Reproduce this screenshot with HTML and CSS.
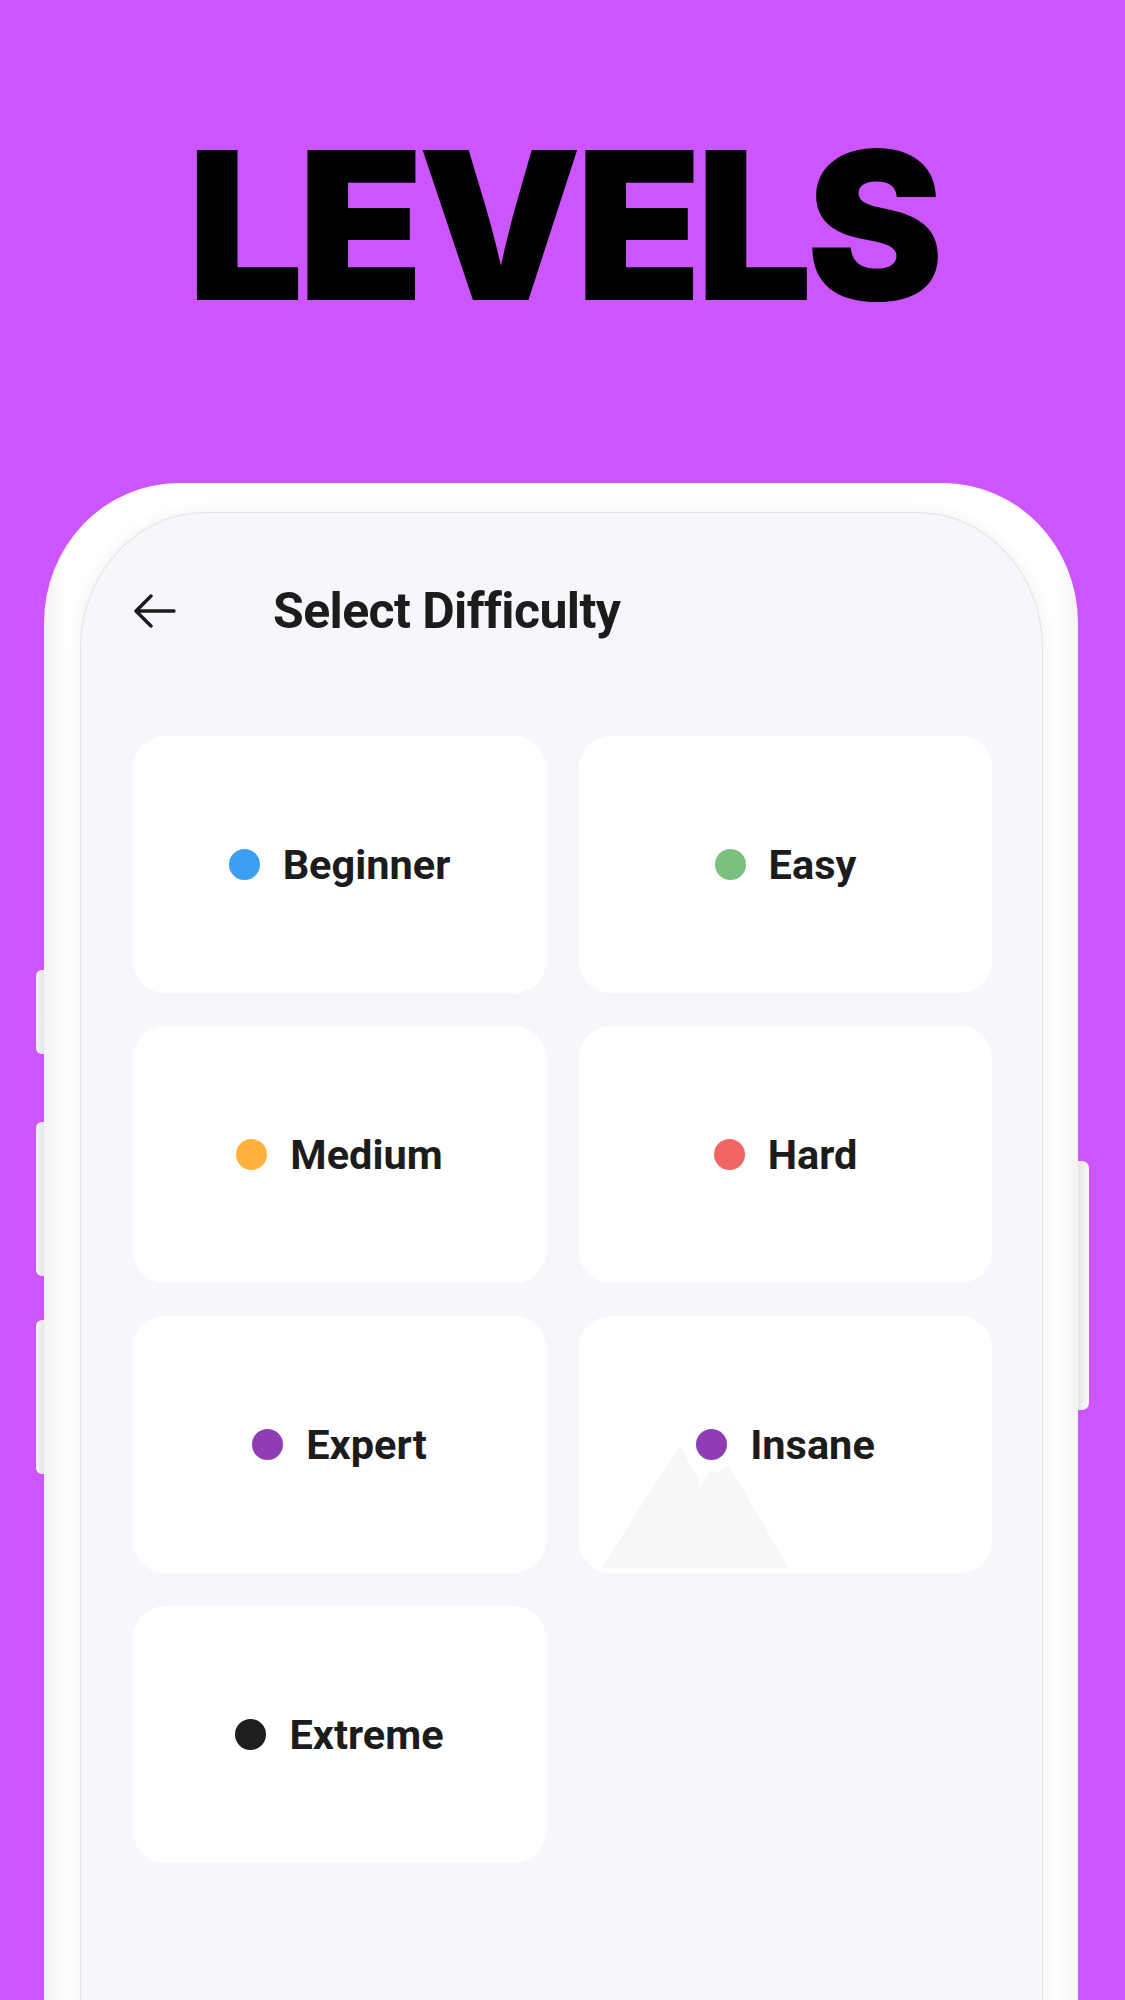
FILE: index.html
```html
<!DOCTYPE html>
<html lang="en">
<head>
<meta charset="utf-8">
<title>Levels</title>
<link rel="stylesheet" href="styles.css">
</head>
<body>
<header class="hero">
  <h1 class="hero-title">LEVELS</h1>
</header>
<div class="phone">
  <span class="btn btn-l1"></span>
  <span class="btn btn-l2"></span>
  <span class="btn btn-l3"></span>
  <span class="btn btn-r1"></span>
  <div class="screen">
    <div class="topbar">
      <svg class="back" viewBox="0 0 42 34" width="42" height="34" aria-hidden="true">
        <path d="M40 17 H3 M17 2 L2 17 L17 32" fill="none" stroke="#1c1c1c" stroke-width="3.4" stroke-linecap="round" stroke-linejoin="round"/>
      </svg>
      <h2 class="title">Select Difficulty</h2>
    </div>
    <div class="grid">
      <div class="card"><span class="dot dot-blue"></span><span class="label">Beginner</span></div>
      <div class="card"><span class="dot dot-green"></span><span class="label">Easy</span></div>
      <div class="card"><span class="dot dot-orange"></span><span class="label">Medium</span></div>
      <div class="card"><span class="dot dot-red"></span><span class="label">Hard</span></div>
      <div class="card"><span class="dot dot-purple"></span><span class="label">Expert</span></div>
      <div class="card card-img">
        <svg class="placeholder" viewBox="0 0 413 257" width="413" height="257" aria-hidden="true">
          <polygon points="22,252 101,130 122,168 143,138 210,252" fill="#f6f7f9"/>
        </svg>
        <span class="dot dot-purple dot-halo"></span><span class="label">Insane</span>
      </div>
      <div class="card"><span class="dot dot-black"></span><span class="label">Extreme</span></div>
    </div>
  </div>
</div>
</body>
</html>
```

FILE: styles.css
```css
* { box-sizing: border-box; }
html, body { margin: 0; padding: 0; }
body {
  background: #cd55fe;
  width: 1125px;
  height: 2000px;
  overflow: hidden;
  font-family: Roboto, "Liberation Sans", Arial, sans-serif;
}
.hero {
  height: 483px;
  display: flex;
  justify-content: center;
  padding-top: 122px;
}
.hero-title {
  margin: 0;
  font-family: Inter, "Liberation Sans", Arial, sans-serif;
  font-weight: 900;
  font-size: 206px;
  line-height: 206px;
  letter-spacing: -6px;
  color: #000;
}
.phone {
  position: relative;
  margin-left: 44px;
  width: 1034px;
  height: 1600px;
  background: linear-gradient(90deg, #f3f3f3 0%, #ffffff 2%, #ffffff 98%, #f3f3f3 100%);
  border-radius: 135px 135px 0 0 / 140px 140px 0 0;
  padding: 30px 36px 0 37px;
}
.btn {
  position: absolute;
  background: linear-gradient(90deg, #f7f7f7, #e4e4e4);
  border-radius: 6px 0 0 6px;
}
.btn-l1 { left: -8px; top: 487px; width: 8px; height: 84px; }
.btn-l2 { left: -8px; top: 639px; width: 8px; height: 154px; }
.btn-l3 { left: -8px; top: 837px; width: 8px; height: 154px; }
.btn-r1 { right: -11px; top: 678px; width: 11px; height: 249px; border-radius: 0 7px 7px 0; background: linear-gradient(90deg, #e6e6e6, #fafafa); }
.screen {
  height: 1560px;
  background: #f6f7fa;
  border-radius: 125px 125px 0 0 / 135px 135px 0 0;
  box-shadow: 0 0 0 1px #e3e3e3, 0 0 14px 3px rgba(0,0,0,0.05);
  padding: 66px 52px 0;
}
.topbar {
  display: flex;
  align-items: center;
  height: 64px;
  padding-left: 1px;
}
.back { display: block; flex: none; }
.title {
  margin: 0 0 0 97px;
  font-family: Roboto, "Liberation Sans", sans-serif;
  font-weight: 700;
  font-size: 50px;
  letter-spacing: -0.6px;
  color: #1c1c1c;
}
.grid {
  margin-top: 93px;
  display: grid;
  grid-template-columns: 413px 413px;
  grid-auto-rows: 257px;
  column-gap: 33px;
  row-gap: 33px;
}
.card {
  position: relative;
  background: #ffffff;
  border-radius: 32px;
  display: flex;
  align-items: center;
  justify-content: center;
  gap: 23px;
  overflow: hidden;
}
.placeholder {
  position: absolute;
  left: 0;
  top: 0;
}
.dot {
  position: relative;
  width: 31px;
  height: 31px;
  border-radius: 50%;
  flex: none;
}
.dot-halo { box-shadow: 0 0 0 12px #ffffff; }
.dot-blue { background: #3d9ff1; }
.dot-green { background: #7bc17e; }
.dot-orange { background: #ffb13c; }
.dot-red { background: #ef6662; }
.dot-purple { background: #8e3db5; }
.dot-black { background: #1e1e20; }
.label {
  position: relative;
  font-family: Roboto, "Liberation Sans", sans-serif;
  font-weight: 700;
  font-size: 41.5px;
  color: #1c1c1c;
  line-height: 1;
}
```
